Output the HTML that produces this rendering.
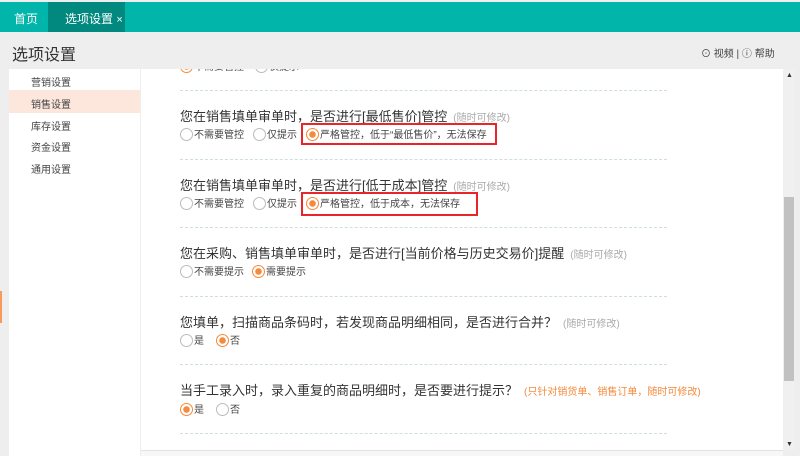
<!DOCTYPE html>
<html><head><meta charset="utf-8"><style>
*{margin:0;padding:0;box-sizing:border-box}
body{width:800px;height:456px;overflow:hidden;background:#eeeeee;font-family:"Liberation Sans","Noto Sans CJK SC",sans-serif;position:relative;color:#333}
.a{position:absolute;white-space:nowrap}
.top{left:0;top:2px;width:800px;height:30px;background:#01b5aa}
.tab2{left:48px;top:2px;width:77px;height:30px;background:#02897f}
.side{left:9px;top:69px;width:131px;height:387px;background:#fff}
.main{left:141px;top:69px;width:642px;height:381px;background:#fff;overflow:hidden}
.dash{position:absolute;left:39px;width:487px;border-top:1px dashed #cfdede}
.q{position:absolute;left:39px;font-size:13px;color:#333}
.q small{font-size:10px;color:#aaa;margin-left:6px}
.r{position:absolute;font-size:10px;color:#444;padding-left:14px;line-height:12px;height:12px}
.r:before{content:"";position:absolute;left:0;top:-2px;width:11px;height:11px;border:1px solid #bbb;border-radius:50%}
.r.on:before{border-color:#f58a3c;background:radial-gradient(circle,#f58a3c 0 3px,#fff 3.5px)}
.box{position:absolute;border:2px solid #e8262a}
.nav{font-size:10px;color:#444;left:24px}
</style></head><body>
<div class="a top"></div>
<div class="a tab2"></div>
<div class="a" style="left:14px;top:10px;font-size:12px;color:#fff">首页</div>
<div class="a" style="left:65px;top:10px;font-size:12px;color:#fff">选项设置 <span style="font-size:11px">×</span></div>
<div class="a" style="left:12px;top:41px;font-size:16px;color:#333">选项设置</div>
<div class="a" style="left:701px;top:45px;font-size:10px;color:#444">⊙ 视频 | ⓘ 帮助</div>
<div class="a side"></div>
<div class="a" style="left:9px;top:90px;width:131px;height:23px;background:#fde7dc"></div>
<div class="a nav" style="top:74px;left:31px">营销设置</div>
<div class="a nav" style="top:96px;left:31px">销售设置</div>
<div class="a nav" style="top:118px;left:31px">库存设置</div>
<div class="a nav" style="top:139px;left:31px">资金设置</div>
<div class="a nav" style="top:161px;left:31px">通用设置</div>
<div class="a" style="left:0;top:291px;width:2px;height:32px;background:#f79a5a"></div>
<div class="a main">
<div class="r on" style="left:39px;top:-7px">不需要管控</div><div class="r" style="left:114px;top:-7px">仅提示</div>
<div class="dash" style="top:21px"></div>
<div class="q" style="top:37px">您在销售填单审单时，是否进行[最低售价]管控<small>(随时可修改)</small></div>
<div class="r" style="left:39px;top:61px">不需要管控</div>
<div class="r" style="left:112px;top:61px">仅提示</div>
<div class="r on" style="left:165px;top:61px">严格管控，低于“最低售价”，无法保存</div>
<div class="box" style="left:160px;top:54px;width:196px;height:22px"></div>
<div class="dash" style="top:90px"></div>
<div class="q" style="top:106px">您在销售填单审单时，是否进行[低于成本]管控<small>(随时可修改)</small></div>
<div class="r" style="left:39px;top:130px">不需要管控</div>
<div class="r" style="left:112px;top:130px">仅提示</div>
<div class="r on" style="left:165px;top:130px">严格管控，低于成本，无法保存</div>
<div class="box" style="left:160px;top:123px;width:177px;height:24px"></div>
<div class="dash" style="top:158px"></div>
<div class="q" style="top:174px">您在采购、销售填单审单时，是否进行[当前价格与历史交易价]提醒<small>(随时可修改)</small></div>
<div class="r" style="left:39px;top:198px">不需要提示</div>
<div class="r on" style="left:111px;top:198px">需要提示</div>
<div class="dash" style="top:227px"></div>
<div class="q" style="top:243px">您填单，扫描商品条码时，若发现商品明细相同，是否进行合并？<small>(随时可修改)</small></div>
<div class="r" style="left:39px;top:267px">是</div>
<div class="r on" style="left:75px;top:267px">否</div>
<div class="dash" style="top:295px"></div>
<div class="q" style="top:311px">当手工录入时，录入重复的商品明细时，是否要进行提示？<small style="color:#f58a3c">(只针对销货单、销售订单，随时可修改)</small></div>
<div class="r on" style="left:39px;top:336px">是</div>
<div class="r" style="left:75px;top:336px">否</div>
<div class="dash" style="top:364px"></div>
</div>
<div class="a" style="left:783px;top:69px;width:12px;height:381px;background:#f0f0f0"></div>
<div class="a" style="left:784px;top:197px;width:10px;height:184px;background:#c1c1c1"></div>
<div class="a" style="left:786px;top:72px;font-size:7px;color:#333">▲</div>
<div class="a" style="left:786px;top:441px;font-size:7px;color:#333">▼</div>
<div class="a" style="left:141px;top:450px;width:642px;height:6px;background:#f7f7f7;border-top:1px solid #e2e2e2"></div>
</body></html>
